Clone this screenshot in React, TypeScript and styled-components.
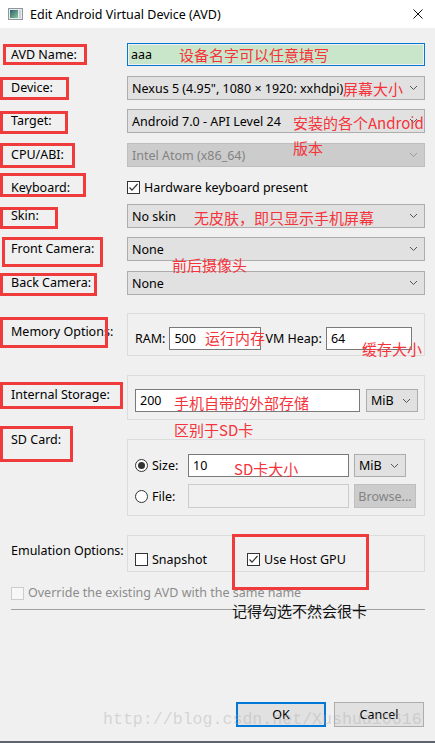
import { createGlobalStyle, styled } from "styled-components";

const GlobalStyle = createGlobalStyle`
  html, body {
    margin: 0;
    padding: 0;
  }
  body {
    background: #f0f0f0;
    font-family: "Noto Sans", "Noto Sans CJK SC", sans-serif;
    font-size: 12.5px;
    color: #000;
  }
`;

const Window = styled.div`
  position: relative;
  width: 435px;
  height: 743px;
  box-sizing: border-box;
  display: flex;
  flex-direction: column;
  background: #f0f0f0;
  border-bottom: 2px solid #5d646d;
  overflow: hidden;
`;

const TitleBar = styled.div`
  height: 28px;
  flex-shrink: 0;
  display: flex;
  align-items: center;
  gap: 7px;
  padding: 0 12px 0 8px;
  background: #fff;
`;

const Title = styled.span`
  flex: 1;
`;

const Row = styled.div<{ $mt: number; $h: number }>`
  display: grid;
  grid-template-columns: 127px 298px;
  margin-top: ${(p) => p.$mt}px;
  height: ${(p) => p.$h}px;
  flex-shrink: 0;
`;

const LabelCell = styled.div<{ $cy?: number }>`
  position: relative;
  display: flex;
  align-items: ${(p) => (p.$cy === undefined ? "center" : "flex-start")};
  padding-left: 11px;
  line-height: 16px;
  white-space: nowrap;
  & > span {
    margin-top: ${(p) => (p.$cy === undefined ? 0 : p.$cy - 8)}px;
  }
`;

const FieldCell = styled.div`
  position: relative;
  display: flex;
  align-items: center;
  gap: 4px;
`;

// red annotation frames drawn over the screenshot
const Mark = styled.div<{ $x: number; $y: number; $w: number; $h: number }>`
  position: absolute;
  z-index: 2;
  left: ${(p) => p.$x}px;
  top: ${(p) => p.$y}px;
  width: ${(p) => p.$w}px;
  height: ${(p) => p.$h}px;
  box-sizing: border-box;
  border: 3px solid #ef3b3b;
  pointer-events: none;
`;

const Note = styled.span<{ $x: number; $y: number; $dark?: boolean }>`
  position: absolute;
  z-index: 3;
  left: ${(p) => p.$x}px;
  top: ${(p) => p.$y}px;
  transform: translateY(-50%);
  font-family: "Noto Sans CJK SC", sans-serif;
  font-size: 15px;
  line-height: 1;
  white-space: nowrap;
  color: ${(p) => (p.$dark ? "#111" : "#f5333a")};
`;

const NameInput = styled.div`
  box-sizing: border-box;
  width: 298px;
  height: 23px;
  border: 1px solid #0078d7;
  padding: 1px;
  & > div {
    height: 100%;
    background: #c9e6ca;
    display: flex;
    align-items: center;
    padding-left: 2px;
  }
`;

const Combo = styled.div<{ $disabled?: boolean; $w?: number; $h?: number }>`
  box-sizing: border-box;
  width: ${(p) => (p.$w ? `${p.$w}px` : "298px")};
  height: ${(p) => p.$h ?? 24}px;
  display: flex;
  align-items: center;
  justify-content: space-between;
  padding: 0 6px 0 4px;
  background: ${(p) => (p.$disabled ? "#cccccc" : "#e1e1e1")};
  border: 1px solid ${(p) => (p.$disabled ? "#bfbfbf" : "#adadad")};
  color: ${(p) => (p.$disabled ? "#838383" : "#000")};
  white-space: nowrap;
`;

const Field = styled.div<{ $w: number; $h?: number; $disabled?: boolean }>`
  box-sizing: border-box;
  width: ${(p) => p.$w}px;
  height: ${(p) => p.$h ?? 23}px;
  display: flex;
  align-items: center;
  padding-left: 4px;
  background: ${(p) => (p.$disabled ? "#f0f0f0" : "#fff")};
  border: 1px solid ${(p) => (p.$disabled ? "#cccccc" : "#7a7a7a")};
`;

const Group = styled.div<{ $pt: number }>`
  position: relative;
  box-sizing: border-box;
  height: 100%;
  border: 1px solid #dcdcdc;
  padding: ${(p) => p.$pt}px 0 0 7px;
  display: flex;
  align-items: flex-start;
  gap: 4px;
`;

const SdGrid = styled.div`
  display: grid;
  grid-template-columns: 48px 161px auto;
  column-gap: 5px;
  row-gap: 7px;
  align-items: center;
`;

const Choice = styled.label<{ $w?: number; $h?: number; $disabled?: boolean }>`
  display: flex;
  align-items: center;
  gap: 4px;
  width: ${(p) => (p.$w ? `${p.$w}px` : "auto")};
  height: ${(p) => (p.$h ? `${p.$h}px` : "auto")};
  color: ${(p) => (p.$disabled ? "#8c8c8c" : "#000")};
  white-space: nowrap;
`;

const Separator = styled.div`
  position: relative;
  margin: 11px 10px 0 11px;
  height: 1px;
  background: #a0a0a0;
  flex-shrink: 0;
`;

const Footer = styled.div`
  margin-top: auto;
  margin-bottom: 14px;
  padding-right: 11px;
  display: flex;
  justify-content: flex-end;
  gap: 8px;
`;

const Button = styled.div<{ $primary?: boolean; $disabled?: boolean }>`
  box-sizing: border-box;
  width: ${(p) => (p.$disabled ? 62 : 90)}px;
  height: ${(p) => (p.$disabled ? 24 : 25)}px;
  display: flex;
  align-items: center;
  justify-content: center;
  background: ${(p) => (p.$disabled ? "#cccccc" : "#e1e1e1")};
  border: ${(p) => (p.$primary ? "2px solid #0078d7" : p.$disabled ? "1px solid #bfbfbf" : "1px solid #adadad")};
  color: ${(p) => (p.$disabled ? "#838383" : "#000")};
`;

const Watermark = styled.div`
  position: absolute;
  z-index: 4;
  left: 103px;
  top: 710px;
  font-family: "Liberation Mono", monospace;
  font-size: 16.6px;
  color: rgba(170, 170, 170, 0.4);
  pointer-events: none;
  white-space: nowrap;
`;

function Chevron({ disabled }: { disabled?: boolean }) {
  return (
    <svg width="9" height="6" viewBox="0 0 9 6">
      <path d="M1 1 L4.5 4.5 L8 1" fill="none" stroke={disabled ? "#9a9a9a" : "#555"} strokeWidth="1" />
    </svg>
  );
}

function Check({ on, disabled }: { on?: boolean; disabled?: boolean }) {
  return (
    <svg width="13" height="13" viewBox="0 0 13 13" style={{ flexShrink: 0 }}>
      <rect x="0.5" y="0.5" width="12" height="12" fill={disabled ? "#f7f7f7" : "#fff"} stroke={disabled ? "#cccccc" : "#333"} />
      {on && <path d="M2.5 6.5 L5 9.2 L10.5 3" fill="none" stroke="#333" strokeWidth="1.2" />}
    </svg>
  );
}

function Radio({ on }: { on?: boolean }) {
  return (
    <svg width="13" height="13" viewBox="0 0 13 13" style={{ flexShrink: 0 }}>
      <circle cx="6.5" cy="6.5" r="6" fill="#fff" stroke="#333" />
      {on && <circle cx="6.5" cy="6.5" r="3.5" fill="#333" />}
    </svg>
  );
}

function AppIcon() {
  return (
    <svg width="15" height="12" viewBox="0 0 15 12">
      <defs>
        <linearGradient id="scr" x1="0" y1="0" x2="1" y2="1">
          <stop offset="0" stopColor="#2c5d6b" />
          <stop offset="1" stopColor="#8cc79a" />
        </linearGradient>
      </defs>
      <rect x="0.5" y="0.5" width="14" height="11" fill="#e9ecef" stroke="#8f969c" />
      <rect x="2" y="2" width="8" height="8" fill="url(#scr)" />
      <rect x="11" y="2" width="2" height="8" fill="#c9d0d6" />
    </svg>
  );
}

function CloseIcon() {
  return (
    <svg width="10" height="10" viewBox="0 0 10 10">
      <path d="M0.5 0.5 L9.5 9.5 M9.5 0.5 L0.5 9.5" stroke="#111" strokeWidth="1" />
    </svg>
  );
}

function ComboRow({
  mt,
  label,
  value,
  disabled,
  mark,
  children,
}: {
  mt: number;
  label: string;
  value: string;
  disabled?: boolean;
  mark: [number, number, number, number];
  children?: React.ReactNode;
}) {
  return (
    <Row $mt={mt} $h={24}>
      <LabelCell>
        <span>{label}</span>
        <Mark $x={mark[0]} $y={mark[1]} $w={mark[2]} $h={mark[3]} />
      </LabelCell>
      <FieldCell>
        <Combo $disabled={disabled}>
          <span>{value}</span>
          <Chevron disabled={disabled} />
        </Combo>
        {children}
      </FieldCell>
    </Row>
  );
}

export default function App() {
  return (
    <>
      <GlobalStyle />
      <Window>
        <TitleBar>
          <AppIcon />
          <Title>Edit Android Virtual Device (AVD)</Title>
          <CloseIcon />
        </TitleBar>

        <Row $mt={15} $h={23}>
          <LabelCell>
            <span>AVD Name:</span>
            <Mark $x={3} $y={1} $w={84} $h={21} />
          </LabelCell>
          <FieldCell>
            <NameInput>
              <div>aaa</div>
            </NameInput>
            <Note $x={52} $y={11}>设备名字可以任意填写</Note>
          </FieldCell>
        </Row>

        <ComboRow mt={10} label="Device:" value={'Nexus 5 (4.95", 1080 × 1920: xxhdpi)'} mark={[0, 1, 69, 23]}>
          <Note $x={216} $y={12}>屏幕大小</Note>
        </ComboRow>

        <ComboRow mt={9} label="Target:" value="Android 7.0 - API Level 24" mark={[0, 2, 68, 23]}>
          <Note $x={166} $y={13}>安装的各个Android</Note>
          <Note $x={166} $y={38}>版本</Note>
        </ComboRow>

        <ComboRow mt={10} label="CPU/ABI:" value="Intel Atom (x86_64)" disabled mark={[0, 0, 75, 25]} />

        <Row $mt={12} $h={13}>
          <LabelCell>
            <span>Keyboard:</span>
            <Mark $x={0} $y={-6} $w={86} $h={24} />
          </LabelCell>
          <FieldCell>
            <Choice>
              <Check on />
              Hardware keyboard present
            </Choice>
          </FieldCell>
        </Row>

        <ComboRow mt={12} label="Skin:" value="No skin" mark={[0, 3, 58, 22]}>
          <Note $x={67} $y={13}>无皮肤，即只显示手机屏幕</Note>
        </ComboRow>

        <ComboRow mt={9} label="Front Camera:" value="None" mark={[2, 0, 101, 30]}>
          <Note $x={45} $y={27}>前后摄像头</Note>
        </ComboRow>

        <ComboRow mt={10} label="Back Camera:" value="None" mark={[0, 2, 97, 23]} />

        <Row $mt={18} $h={43}>
          <LabelCell $cy={19}>
            <span>Memory Options:</span>
            <Mark $x={0} $y={4} $w={108} $h={31} />
          </LabelCell>
          <Group $pt={13}>
            <Choice $h={23}>RAM:</Choice>
            <Field $w={92}>500</Field>
            <Choice $h={23}>VM Heap:</Choice>
            <Field $w={86}>64</Field>
            <Note $x={77} $y={23}>运行内存</Note>
            <Note $x={234} $y={34}>缓存大小</Note>
          </Group>
        </Row>

        <Row $mt={19} $h={45}>
          <LabelCell $cy={20}>
            <span>Internal Storage:</span>
            <Mark $x={0} $y={7} $w={123} $h={27} />
          </LabelCell>
          <Group $pt={13}>
            <Field $w={225}>200</Field>
            <Combo $w={52} $h={23} style={{ marginLeft: 2 }}>
              <span>MiB</span>
              <Chevron />
            </Combo>
            <Note $x={46} $y={26}>手机自带的外部存储</Note>
            <Note $x={46} $y={53}>区别于SD卡</Note>
          </Group>
        </Row>

        <Row $mt={19} $h={77}>
          <LabelCell $cy={1}>
            <span>SD Card:</span>
            <Mark $x={0} $y={-13} $w={73} $h={36} />
          </LabelCell>
          <Group $pt={14}>
            <SdGrid>
              <Choice>
                <Radio on />
                Size:
              </Choice>
              <Field $w={161}>10</Field>
              <Combo $w={52} $h={23}>
                <span>MiB</span>
                <Chevron />
              </Combo>
              <Choice>
                <Radio />
                File:
              </Choice>
              <Field $w={161} $h={24} $disabled />
              <Button $disabled>Browse...</Button>
            </SdGrid>
            <Note $x={106} $y={28}>SD卡大小</Note>
          </Group>
        </Row>

        <Row $mt={19} $h={37}>
          <LabelCell $cy={16}>
            <span>Emulation Options:</span>
          </LabelCell>
          <Group $pt={15}>
            <Choice $w={108}>
              <Check />
              Snapshot
            </Choice>
            <Choice>
              <Check on />
              Use Host GPU
            </Choice>
            <Mark $x={104} $y={-2} $w={137} $h={56} />
          </Group>
        </Row>

        <Row $mt={13} $h={13}>
          <LabelCell style={{ gridColumn: "1 / 3" }}>
            <Choice $disabled>
              <Check disabled />
              Override the existing AVD with the same name
            </Choice>
          </LabelCell>
        </Row>

        <Separator>
          <Note $x={221} $y={1} $dark>
            记得勾选不然会很卡
          </Note>
        </Separator>

        <Footer>
          <Button $primary>OK</Button>
          <Button>Cancel</Button>
        </Footer>

        <Watermark>http://blog.csdn.net/Xushuai0616</Watermark>
      </Window>
    </>
  );
}
